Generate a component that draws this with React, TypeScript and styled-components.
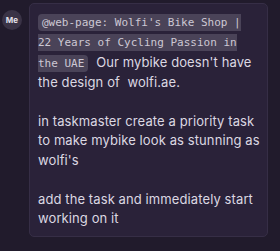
import styled, { createGlobalStyle } from "styled-components";

const GlobalStyle = createGlobalStyle`
    html, body {
        margin: 0;
        padding: 0;
        background: #211b2c;
    }
    body {
        font-family: Inter, "Noto Sans", sans-serif;
        -webkit-font-smoothing: antialiased;
    }
`;

const Thread = styled.div`
    display: flex;
    align-items: flex-start;
    gap: 7px;
    padding: 3px 12px 0 2px;
    min-height: 251px;
    box-sizing: border-box;
    background: #211b2c;
`;

const Avatar = styled.div`
    flex: 0 0 20px;
    width: 20px;
    height: 20px;
    margin-top: 7px;
    border-radius: 50%;
    background: #3a3346;
    display: flex;
    align-items: center;
    justify-content: center;

    color: #e4e0ea;
    font-size: 8px;
    font-weight: 700;
    letter-spacing: 0.1px;
`;

const Bubble = styled.div`
    flex: 1;
    padding: 8px 6px 8px 8px;
    border: 1px solid #362e46;
    border-radius: 5px;
    background: #2a2239;

    color: #dcd8e2;
    font-size: 13px;
    letter-spacing: 0.1px;
    line-height: 19.4px;
`;

const Paragraph = styled.p`
    margin: 0;

    & + & {
        margin-top: 19.4px;
    }
`;

const Mention = styled.span`
    margin-right: 4px;
    padding: 2px 4px;
    border-radius: 4px;
    background: #4a4358;
    color: #cdc8d4;
    font-family: "DejaVu Sans Mono", "Liberation Mono", monospace;
    font-size: 11px;
    letter-spacing: 0;
`;

export default function App() {
    return (
        <>
            <GlobalStyle />
            <Thread>
                <Avatar>Me</Avatar>
                <Bubble>
                    <Paragraph>
                        <Mention>
                            @web-page: Wolfi's Bike Shop |<br />
                            22 Years of Cycling Passion in<br />
                            the UAE
                        </Mention>{" "}
                        Our mybike doesn't have the design of&nbsp; wolfi.ae.
                    </Paragraph>
                    <Paragraph>
                        in taskmaster create a priority task to make mybike look as stunning as wolfi's
                    </Paragraph>
                    <Paragraph>add the task and immediately start working on it</Paragraph>
                </Bubble>
            </Thread>
        </>
    );
}
